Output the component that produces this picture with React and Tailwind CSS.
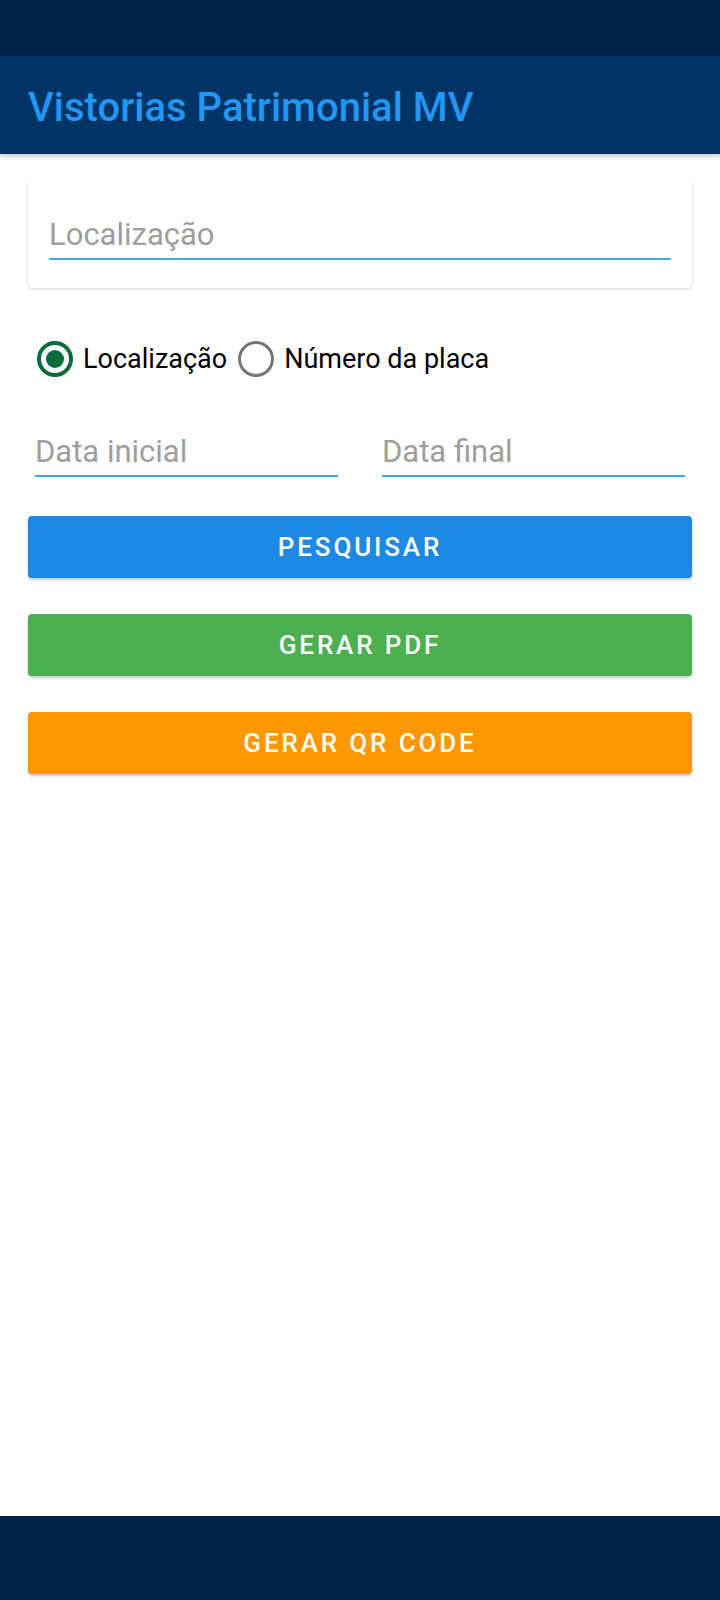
import React, { useState } from "react";

export default function App() {
  const [modo, setModo] = useState("localizacao");

  const radios = [
    { id: "localizacao", label: "Localização" },
    { id: "placa", label: "Número da placa" },
  ];

  const botoes = [
    { texto: "PESQUISAR", cor: "bg-[#1e88e5]" },
    { texto: "GERAR PDF", cor: "bg-[#4caf50]" },
    { texto: "GERAR QR CODE", cor: "bg-[#ff9800]" },
  ];

  return (
    <div className="min-h-[1600px] flex flex-col bg-white font-['Roboto',sans-serif]">
      {/* Status bar */}
      <div className="h-[56px] bg-[#002347]" />

      {/* App bar */}
      <header className="h-[98px] bg-[#003366] flex items-center px-[28px] pt-[5px] shadow-[0_3px_4px_rgba(0,0,0,0.18)] relative z-10">
        <h1 className="text-[40px] font-medium text-[#2196f3] leading-none">
          Vistorias Patrimonial MV
        </h1>
      </header>

      <main className="flex-1 px-[28px] pt-[27px]">
        {/* Campo de localização */}
        <div className="bg-white rounded-[4px] shadow-[0_1px_3px_rgba(0,0,0,0.18)] px-[21px] pt-[33px] pb-[28px]">
          <div className="border-b-2 border-[#42a5f5] pb-[3px]">
            <span className="text-[31px] text-[#9e9e9e] leading-[41px]">Localização</span>
          </div>
        </div>

        {/* Radios */}
        <div className="flex items-center mt-[53px] pl-[9px]">
          {radios.map((r) => (
            <button
              key={r.id}
              onClick={() => setModo(r.id)}
              className="flex items-center mr-[11px]"
            >
              {modo === r.id ? (
                <span className="w-[36px] h-[36px] rounded-full border-[4px] border-[#0b6b3a] flex items-center justify-center">
                  <span className="w-[18px] h-[18px] rounded-full bg-[#0b6b3a]" />
                </span>
              ) : (
                <span className="w-[36px] h-[36px] rounded-full border-[3px] border-[#757575]" />
              )}
              <span className="ml-[10px] text-[27px] text-black leading-none">{r.label}</span>
            </button>
          ))}
        </div>

        {/* Datas */}
        <div className="grid grid-cols-2 gap-[44px] mt-[54px] px-[7px]">
          {["Data inicial", "Data final"].map((d) => (
            <div key={d} className="border-b-2 border-[#42a5f5] pb-[3px]">
              <span className="text-[31px] text-[#9e9e9e] leading-[41px]">{d}</span>
            </div>
          ))}
        </div>

        {/* Botões */}
        <div className="flex flex-col gap-[36px] mt-[39px]">
          {botoes.map((b) => (
            <button
              key={b.texto}
              className={`${b.cor} h-[62px] rounded-[4px] shadow-[0_2px_3px_rgba(0,0,0,0.22)] text-white text-[26px] font-medium tracking-[0.11em]`}
            >
              {b.texto}
            </button>
          ))}
        </div>
      </main>

      {/* Navigation bar */}
      <div className="h-[84px] bg-[#002347]" />
    </div>
  );
}
